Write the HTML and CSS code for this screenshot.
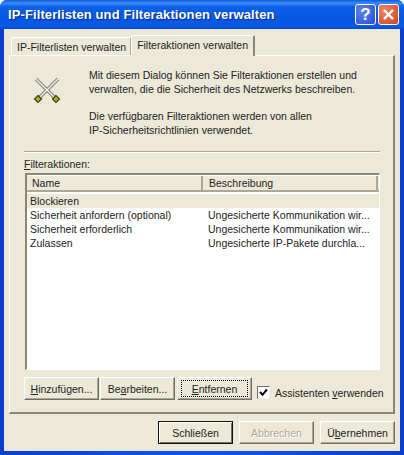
FILE: index.html
```html
<!DOCTYPE html>
<html lang="de">
<head>
<meta charset="utf-8">
<title>IP-Filterlisten und Filteraktionen verwalten</title>
<link rel="stylesheet" href="styles.css">
</head>
<body>
<div class="window">
  <div class="titlebar">
    <span class="title">IP-Filterlisten und Filteraktionen verwalten</span>
    <span class="capbtn help">?</span>
    <span class="capbtn close">
      <svg width="13" height="13" viewBox="0 0 13 13"><path d="M2 2 L11 11 M11 2 L2 11" stroke="#fff" stroke-width="2.4" fill="none"/></svg>
    </span>
  </div>
  <div class="client">
    <div class="tabs">
      <div class="tab">IP-Filterlisten verwalten</div>
      <div class="tab active">Filteraktionen verwalten</div>
    </div>
    <div class="panel">
      <div class="intro">
        <svg class="swords" width="30" height="30" viewBox="0 0 30 30">
          <path d="M4 2 L22 20" stroke="#85857e" stroke-width="3.6" fill="none"/>
          <path d="M26 2 L8 20" stroke="#85857e" stroke-width="3.6" fill="none"/>
          <path d="M4 2 L22 20" stroke="#f4f4ee" stroke-width="1.2" fill="none"/>
          <path d="M26 2 L8 20" stroke="#f4f4ee" stroke-width="1.2" fill="none"/>
          <path d="M6 18.5 L9.5 22 L6 25.5 L2.5 22 Z" fill="#b8b020" stroke="#3c3c0c" stroke-width="1.2"/>
          <path d="M24 18.5 L20.5 22 L24 25.5 L27.5 22 Z" fill="#b8b020" stroke="#3c3c0c" stroke-width="1.2"/>
        </svg>
        <div class="introtext">
          <p>Mit diesem Dialog können Sie Filteraktionen erstellen und<br>verwalten, die die Sicherheit des Netzwerks beschreiben.</p>
          <p>Die verfügbaren Filteraktionen werden von allen<br>IP-Sicherheitsrichtlinien verwendet.</p>
        </div>
      </div>
      <div class="divider"></div>
      <div class="label"><u>F</u>ilteraktionen:</div>
      <div class="list">
        <div class="listhead">
          <div class="col col1">Name</div>
          <div class="col col2">Beschreibung</div>
        </div>
        <div class="rows">
          <div class="row selected"><span class="c1">Blockieren</span><span class="c2"></span></div>
          <div class="row"><span class="c1">Sicherheit anfordern (optional)</span><span class="c2">Ungesicherte Kommunikation wir...</span></div>
          <div class="row"><span class="c1">Sicherheit erforderlich</span><span class="c2">Ungesicherte Kommunikation wir...</span></div>
          <div class="row"><span class="c1">Zulassen</span><span class="c2">Ungesicherte IP-Pakete durchla...</span></div>
        </div>
      </div>
      <div class="actions">
        <button class="btn"><u>H</u>inzufügen...</button>
        <button class="btn">Be<u>a</u>rbeiten...</button>
        <button class="btn focus"><span class="focusring"><u>E</u>ntfernen</span></button>
        <label class="check">
          <span class="box"><svg width="9" height="9" viewBox="0 0 9 9"><path d="M1 4 L3.5 6.8 L8 1.5" stroke="#000" stroke-width="2" fill="none"/></svg></span>
          <span>Assistenten <u>v</u>erwenden</span>
        </label>
      </div>
    </div>
    <div class="footer">
      <button class="btn default">Schließen</button>
      <button class="btn disabled">Abbrechen</button>
      <button class="btn">Ü<u>b</u>ernehmen</button>
    </div>
  </div>
</div>
</body>
</html>
```
FILE: styles.css
```css
* { box-sizing: border-box; }
html, body { margin: 0; padding: 0; }
body { width: 404px; height: 455px; overflow: hidden; font-family: "Liberation Sans", Arial, sans-serif; font-size: 10.5px; color: #222; }
.window { width: 404px; height: 455px; display: flex; flex-direction: column; padding: 0 4px 4px; background: linear-gradient(90deg, #0a3fd0, #0d55e8 50%, #0a3fd0); border-radius: 7px 7px 0 0; }
.titlebar { height: 30px; margin: 0 -4px; padding: 0 5px 0 8px; display: flex; align-items: center; gap: 2px; background: linear-gradient(180deg, #0a5ae0 0, #3a8cf6 3px, #0a5fe8 7px, #0558e0 20px, #0a5ae8 26px, #0345c8 30px); border-radius: 7px 7px 0 0; }
.title { flex: 1; color: #fff; font-size: 13px; font-weight: 700; letter-spacing: 0.1px; text-shadow: 1px 1px 1px #0a2a90; white-space: nowrap; }
.capbtn { width: 21px; height: 21px; border: 1px solid #fff; border-radius: 3px; display: flex; align-items: center; justify-content: center; color: #fff; font-size: 17px; font-weight: 700; }
.help { background: radial-gradient(circle at 30% 30%, #5b82ea, #2a4fd0); }
.close { background: radial-gradient(circle at 30% 30%, #e88a6a, #d0421c); }
.client { flex: 1; background: #ece9d8; display: flex; flex-direction: column; padding: 6px 5px 7px; }
.tabs { display: flex; height: 20px; padding-left: 2px; align-items: flex-end; position: relative; z-index: 1; }
.tab { height: 18px; padding: 3px 4px 0 5px; background: #ece9d8; border: 1px solid #fff; border-bottom: 0; border-right: 1px solid #aca899; border-radius: 2px 2px 0 0; white-space: nowrap; }
.tab.active { height: 21px; margin-bottom: -1px; padding: 3px 5px 0 5px; border-right: 2px solid #8a8778; }
.panel { height: 359px; background: #ece9d8; border: 1px solid #fff; border-right: 2px solid #8a8778; border-bottom: 2px solid #8a8778; padding: 12px 13px 0 14px; display: flex; flex-direction: column; }
.intro { display: flex; height: 83px; }
.swords { margin: 9px 0 0 8px; flex: none; }
.introtext { margin-left: 27px; padding-top: 1px; line-height: 13.5px; }
.introtext p { margin: 0 0 14px; }
.divider { height: 2px; background: #aca899; border-bottom: 1px solid #fff; }
.label { margin-top: 4px; height: 16px; line-height: 14px; }
.list { height: 197px; margin-left: 1px; border: 2px solid #8a8778; border-right: 1px solid #fff; border-bottom: 1px solid #fff; background: #fff; overflow: hidden; }
.listhead { display: flex; height: 17px; background: #ece9d8; border-bottom: 2px solid #aca899; border-top: 1px solid #fff; }
.col { padding-top: 1px; line-height: 13px; white-space: nowrap; }
.col1 { width: 176px; padding-left: 5px; border-right: 2px solid #aca899; }
.col2 { flex: 1; padding-left: 6px; border-right: 2px solid #aca899; margin-right: 1px; }
.rows { padding-top: 2px; }
.row { display: flex; height: 14px; line-height: 14px; white-space: nowrap; }
.row.selected { background: #ece9d8; }
.c1 { width: 181px; padding-left: 3px; }
.c2 { flex: 1; }
.actions { display: flex; align-items: flex-start; margin-top: 7px; gap: 1px; }
.btn { flex: none; width: 75px; height: 23px; padding: 0; font: inherit; color: #222; background: #ece9d8; border: 1px solid; border-color: #fff #716f64 #716f64 #fff; box-shadow: inset -1px -1px 0 #aca899; display: flex; align-items: center; justify-content: center; }
.btn.focus { margin-left: 1px; }
.focusring { width: 67px; height: 17px; border: 1px dotted #000; display: flex; align-items: center; justify-content: center; }
.check { display: flex; align-items: center; gap: 5px; margin: 9px 0 0 4px; white-space: nowrap; }
.box { flex: none; width: 13px; height: 13px; background: #fff; border: 1px solid; border-color: #716f64 #f4f2e8 #f4f2e8 #716f64; display: flex; align-items: center; justify-content: center; }
.footer { display: flex; justify-content: flex-end; gap: 6px; margin-top: 7px; }
.btn.default { border: 1px solid #111; box-shadow: inset 1px 1px 0 #fff, inset -1px -1px 0 #716f64; }
.btn.disabled { color: #aca899; text-shadow: 1px 1px 0 #fff; }
```
